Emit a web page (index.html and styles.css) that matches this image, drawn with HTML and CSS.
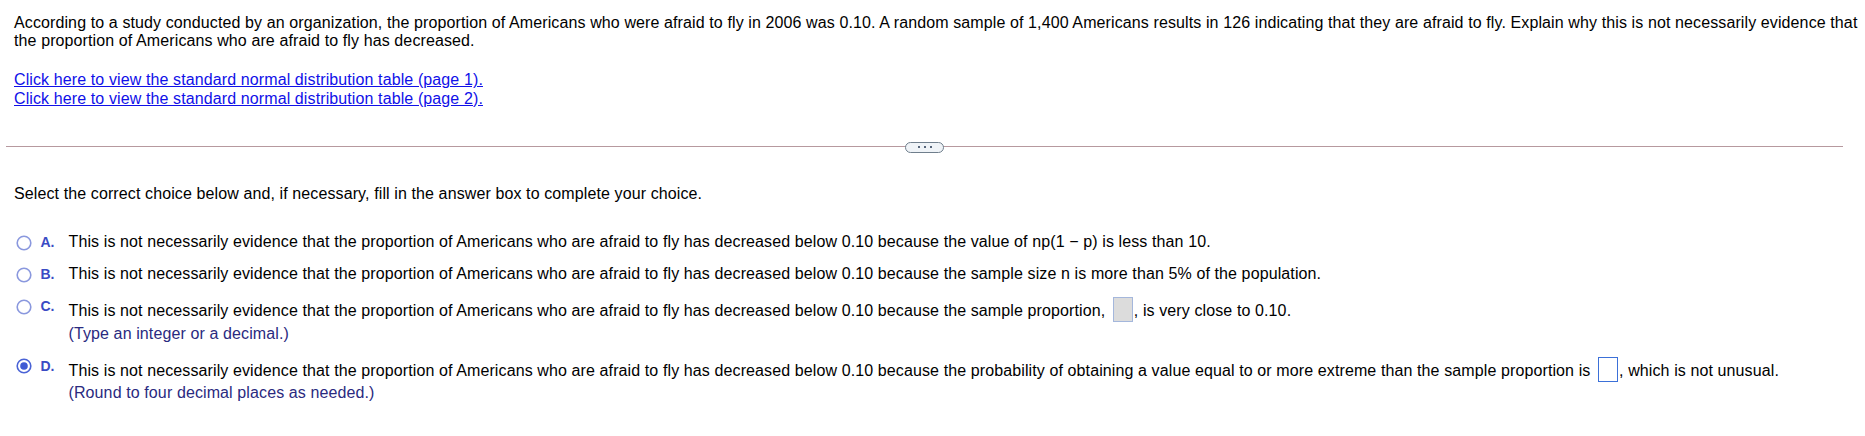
FILE: index.html
```html
<!DOCTYPE html>
<html>
<head>
<meta charset="utf-8">
<link rel="stylesheet" href="styles.css">
</head>
<body>
<div class="page">
  <p class="question">According to a study conducted by an organization, the proportion of Americans who were afraid to fly in 2006 was 0.10. A random sample of 1,400 Americans results in 126 indicating that they are afraid to fly. Explain why this is not necessarily evidence that the proportion of Americans who are afraid to fly has decreased.</p>
  <div class="links">
    <a href="#" class="link">Click here to view the standard normal distribution table (page 1).</a>
    <a href="#" class="link">Click here to view the standard normal distribution table (page 2).</a>
  </div>
  <div class="divider"><span class="pill"><i class="dot"></i><i class="dot"></i><i class="dot"></i></span></div>
  <p class="instr">Select the correct choice below and, if necessary, fill in the answer box to complete your choice.</p>
  <div class="options">
    <div class="opt">
      <svg class="radio" width="16" height="16" viewBox="0 0 16 16"><circle cx="8" cy="8" r="6.8" fill="#fff" stroke="#8a98de" stroke-width="1.6"/></svg>
      <span class="letter">A.</span>
      <div class="body"><div class="line">This is not necessarily evidence that the proportion of Americans who are afraid to fly has decreased below 0.10 because the value of np(1 − p) is less than 10.</div></div>
    </div>
    <div class="opt">
      <svg class="radio" width="16" height="16" viewBox="0 0 16 16"><circle cx="8" cy="8" r="6.8" fill="#fff" stroke="#8a98de" stroke-width="1.6"/></svg>
      <span class="letter">B.</span>
      <div class="body"><div class="line">This is not necessarily evidence that the proportion of Americans who are afraid to fly has decreased below 0.10 because the sample size n is more than 5% of the population.</div></div>
    </div>
    <div class="opt">
      <svg class="radio" width="16" height="16" viewBox="0 0 16 16"><circle cx="8" cy="8" r="6.8" fill="#fff" stroke="#8a98de" stroke-width="1.6"/></svg>
      <span class="letter">C.</span>
      <div class="body">
        <div class="line">This is not necessarily evidence that the proportion of Americans who are afraid to fly has decreased below 0.10 because the sample proportion, <span class="box box-disabled"></span>, is very close to 0.10.</div>
        <div class="note">(Type an integer or a decimal.)</div>
      </div>
    </div>
    <div class="opt">
      <svg class="radio" width="16" height="16" viewBox="0 0 16 16"><circle cx="8" cy="8" r="6.8" fill="#fff" stroke="#4a63d6" stroke-width="1.6"/><circle cx="8" cy="8" r="3.8" fill="#3f5bd4"/></svg>
      <span class="letter">D.</span>
      <div class="body">
        <div class="line">This is not necessarily evidence that the proportion of Americans who are afraid to fly has decreased below 0.10 because the probability of obtaining a value equal to or more extreme than the sample proportion is <span class="box box-active"></span>, which is not unusual.</div>
        <div class="note">(Round to four decimal places as needed.)</div>
      </div>
    </div>
  </div>
</div>
</body>
</html>
```

FILE: styles.css
```css
html, body {
  margin: 0;
  padding: 0;
  background: #fff;
}
.page {
  font-family: "Liberation Sans", Arial, sans-serif;
  font-size: 16px;
  line-height: 18px;
  letter-spacing: 0.11px;
  color: #000;
  padding: 14px 7px 0 14px;
}
.question {
  margin: 0;
}
.links {
  margin-top: 21px;
  display: flex;
  flex-direction: column;
  align-items: flex-start;
  line-height: 18.5px;
}
.link {
  color: #1010e8;
  text-decoration: underline;
}
.divider {
  margin: 38px 15px 0 -8px;
  height: 1px;
  background: #b7999f;
  display: flex;
  justify-content: center;
  align-items: center;
}
.pill {
  box-sizing: border-box;
  width: 39px;
  height: 11px;
  border: 1.5px solid #6f7e8c;
  border-radius: 6px;
  background: #eff3f7;
  display: flex;
  justify-content: center;
  align-items: center;
  gap: 4px;
  margin-top: 1px;
}
.dot {
  width: 2px;
  height: 2px;
  background: #56657a;
}
.instr {
  margin: 38px 0 0 0;
}
.options {
  margin-top: 30px;
  display: flex;
  flex-direction: column;
  gap: 14px;
}
.opt {
  display: flex;
  align-items: flex-start;
}
.radio {
  flex: none;
  margin: 1.5px 9px 0 1.5px;
}
.letter {
  flex: none;
  width: 28px;
  font-size: 14px;
  font-weight: bold;
  letter-spacing: 0;
  color: #3a4bc4;
  line-height: 18px;
}
.body {
  flex: 1;
}
.note {
  margin-top: 2.5px;
  color: #2a2a80;
}
.box {
  display: inline-block;
  box-sizing: border-box;
  width: 20px;
  height: 25px;
  vertical-align: -6px;
  margin: 0 1px 0 3px;
}
.box-disabled {
  background: #dcdcdc;
  border: 1px solid #a4b7dc;
}
.box-active {
  background: #fff;
  border: 1.5px solid #3b70d8;
}
```
